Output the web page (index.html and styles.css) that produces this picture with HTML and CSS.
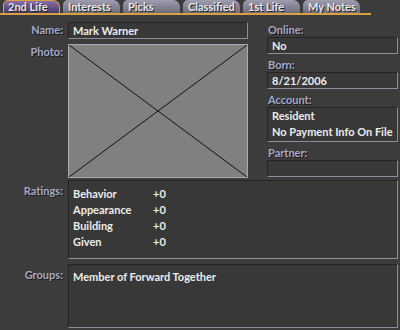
FILE: index.html
```html
<!DOCTYPE html>
<html lang="en">
<head>
    <meta charset="UTF-8">
    <meta name="viewport" content="width=device-width, initial-scale=1.0">
    <title>Profile</title>
    <link rel="stylesheet" href="styles.css">
</head>
<body>
    <div class="tabs">
        <div class="tab active">2nd Life</div>
        <div class="tab">Interests</div>
        <div class="tab">Picks</div>
        <div class="tab">Classified</div>
        <div class="tab">1st Life</div>
        <div class="tab">My Notes</div>
    </div>

    <div class="panel">
        <div class="left">
            <div class="row">
                <span class="label">Name:</span>
                <div class="field name">Mark Warner</div>
            </div>
            <div class="row">
                <span class="label">Photo:</span>
                <div class="photo">
                    <svg width="178" height="132" viewBox="0 0 178 132">
                        <line x1="0" y1="0" x2="178" y2="132" stroke="#111" stroke-width="1"/>
                        <line x1="178" y1="0" x2="0" y2="132" stroke="#111" stroke-width="1"/>
                    </svg>
                </div>
            </div>
        </div>

        <div class="right">
            <span class="label top">Online:</span>
            <div class="field">No</div>
            <span class="label top">Born:</span>
            <div class="field">8/21/2006</div>
            <span class="label top">Account:</span>
            <div class="field tall">Resident<br>No Payment Info On File</div>
            <span class="label top">Partner:</span>
            <div class="field"></div>
        </div>
    </div>

    <div class="row wide">
        <span class="label">Ratings:</span>
        <div class="box ratings">
            <div class="rating"><span>Behavior</span><span>+0</span></div>
            <div class="rating"><span>Appearance</span><span>+0</span></div>
            <div class="rating"><span>Building</span><span>+0</span></div>
            <div class="rating"><span>Given</span><span>+0</span></div>
        </div>
    </div>

    <div class="row wide">
        <span class="label">Groups:</span>
        <div class="box groups">Member of Forward Together</div>
    </div>
</body>
</html>
```

FILE: styles.css
```css
body {
  margin: 0;
  padding: 0;
  background: #3c3c3c;
  font-family: Lato, "Open Sans", sans-serif;
  font-size: 11px;
  font-weight: 700;
  color: #ececec;
  overflow: hidden;
}

.tabs {
  display: flex;
  gap: 3px;
  padding-left: 3px;
  height: 13px;
  border-bottom: 2px solid #d8a040;
  width: 368px;
  box-sizing: content-box;
}

.tab {
  width: 57px;
  height: 13px;
  box-sizing: border-box;
  padding: 0 0 0 5px;
  line-height: 13px;
  font-size: 11px;
  color: #e8e8ee;
  text-shadow: 1px 1px 0 #222;
  border-radius: 5px 7px 0 0;
  background: linear-gradient(#a09eae, #6e6c7c);
  overflow: hidden;
  white-space: nowrap;
}

.tab.active {
  background: linear-gradient(#8a70a8, #4a3868);
  border: 1px solid #d8a040;
  border-bottom: none;
  padding-left: 4px;
  line-height: 12px;
}

.panel {
  display: flex;
  padding-top: 7px;
}

.left {
  width: 248px;
  display: flex;
  flex-direction: column;
  gap: 5px;
}

.row {
  display: flex;
  align-items: flex-start;
}

.label {
  width: 63px;
  padding-right: 5px;
  box-sizing: content-box;
  text-align: right;
  color: #a4aac8;
  text-shadow: 1px 1px 0 #1a1a1a;
  line-height: 16px;
}

.field {
  box-sizing: border-box;
  height: 17px;
  line-height: 15px;
  padding: 0 4px;
  background: #383838;
  border: 1px solid #8c8f98;
  border-top-color: #242424;
  border-left-color: #242424;
  white-space: nowrap;
}

.name {
  width: 180px;
}

.photo {
  width: 180px;
  height: 134px;
  box-sizing: border-box;
  background: #808080;
  border: 1px solid #a4aab8;
}

.photo svg {
  display: block;
}

.right {
  margin-left: 19px;
  width: 131px;
  display: flex;
  flex-direction: column;
}

.right .label.top {
  width: auto;
  text-align: left;
  padding: 0 0 0 1px;
  line-height: 14px;
  margin-top: 1px;
}

.right .field {
  margin-bottom: 3px;
}

.right .field:last-child {
  margin-bottom: 0;
}

.field.tall {
  height: 35px;
  line-height: 16px;
  white-space: nowrap;
}

.wide {
  margin-top: 2px;
}

.wide + .wide {
  margin-top: 5px;
}

.wide .label {
  padding-top: 3px;
}

.box {
  box-sizing: border-box;
  width: 330px;
  background: #383838;
  border: 1px solid #8c8f98;
  border-top-color: #242424;
  border-left-color: #242424;
  padding: 4px 4px;
}

.ratings {
  height: 79px;
  padding-top: 5px;
}

.rating {
  display: flex;
  line-height: 16px;
}

.rating span:first-child {
  width: 80px;
}

.groups {
  height: 64px;
  padding-top: 5px;
}
```
